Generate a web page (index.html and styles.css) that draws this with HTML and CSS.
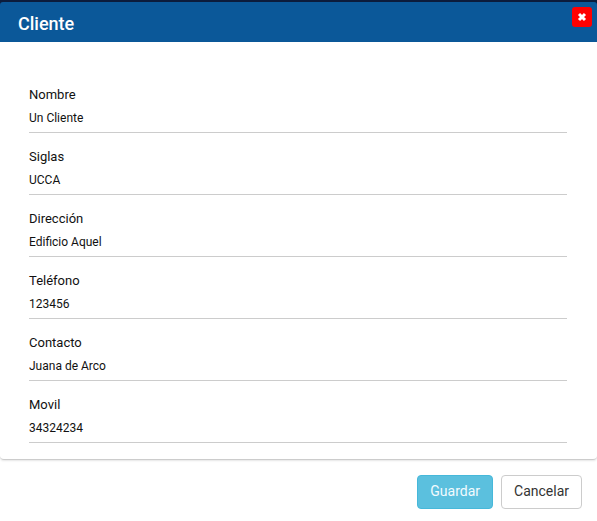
FILE: index.html
```html
<!DOCTYPE html>
<html lang="es">
<head>
<meta charset="utf-8">
<title>Cliente</title>
<link rel="stylesheet" href="styles.css">
</head>
<body>
<form class="dialog">
  <div class="backdrop">
    <header class="dialog-header">
      <h1 class="dialog-title">Cliente</h1>
      <button class="close" type="button" aria-label="Cerrar">
        <svg class="close-icon" viewBox="0 0 10 10" aria-hidden="true"><path d="M2 2 8 8M8 2 2 8"/></svg>
      </button>
    </header>
  </div>
  <div class="card">
    <div class="field">
      <label for="nombre">Nombre</label>
      <input id="nombre" type="text" value="Un Cliente">
    </div>
    <div class="field">
      <label for="siglas">Siglas</label>
      <input id="siglas" type="text" value="UCCA">
    </div>
    <div class="field">
      <label for="direccion">Dirección</label>
      <input id="direccion" type="text" value="Edificio Aquel">
    </div>
    <div class="field">
      <label for="telefono">Teléfono</label>
      <input id="telefono" type="text" value="123456">
    </div>
    <div class="field">
      <label for="contacto">Contacto</label>
      <input id="contacto" type="text" value="Juana de Arco">
    </div>
    <div class="field">
      <label for="movil">Movil</label>
      <input id="movil" type="text" value="34324234">
    </div>
  </div>
  <footer class="actions">
    <button class="btn btn-info" type="submit">Guardar</button>
    <button class="btn btn-default" type="button">Cancelar</button>
  </footer>
</form>
</body>
</html>
```
FILE: styles.css
```css
* {
  box-sizing: border-box;
}

body {
  margin: 0;
  background: #fff;
  color: #111;
  font-family: Roboto, "Liberation Sans", sans-serif;
}

.backdrop {
  padding-top: 2px;
  background: #0c1c3c;
}

.dialog-header {
  display: flex;
  align-items: flex-start;
  justify-content: space-between;
  height: 40px;
  padding: 5px 5px 0 18px;
  border-radius: 3px 3px 0 0;
  background: #0b5899;
}

.dialog-title {
  margin: 0;
  color: #fff;
  font-size: 18px;
  font-weight: 500;
  line-height: 34px;
}

.close {
  display: flex;
  align-items: center;
  justify-content: center;
  width: 20px;
  height: 20px;
  padding: 0;
  border: 0;
  border-radius: 3px;
  background: #f00;
}

.close-icon {
  width: 10px;
  height: 10px;
  fill: none;
  stroke: #fff;
  stroke-width: 3;
}

.card {
  display: flex;
  flex-direction: column;
  gap: 14px;
  padding: 43px 30px 16px 29px;
  border-bottom: 1px solid #ccc;
  border-radius: 0 0 4px 4px;
  box-shadow: 0 1px 2px rgba(0, 0, 0, 0.1);
}

.field {
  display: flex;
  flex-direction: column;
}

.field label {
  font-size: 13px;
  line-height: 20px;
}

.field input {
  width: 100%;
  height: 28px;
  padding: 0 0 2px;
  border: 0;
  border-bottom: 1px solid #ccc;
  outline: 0;
  background: transparent;
  color: #111;
  font-family: inherit;
  font-size: 12px;
}

.actions {
  display: flex;
  justify-content: flex-end;
  gap: 8px;
  padding: 15px 15px 12px;
}

.btn {
  padding: 5px 12px 7px;
  border: 1px solid;
  border-radius: 4px;
  font-family: inherit;
  font-size: 14px;
  line-height: 20px;
}

.btn-info {
  border-color: #46b8da;
  background: #5bc0de;
  color: #f2fbfe;
}

.btn-default {
  border-color: #ccc;
  background: #fff;
  color: #333;
}
```
